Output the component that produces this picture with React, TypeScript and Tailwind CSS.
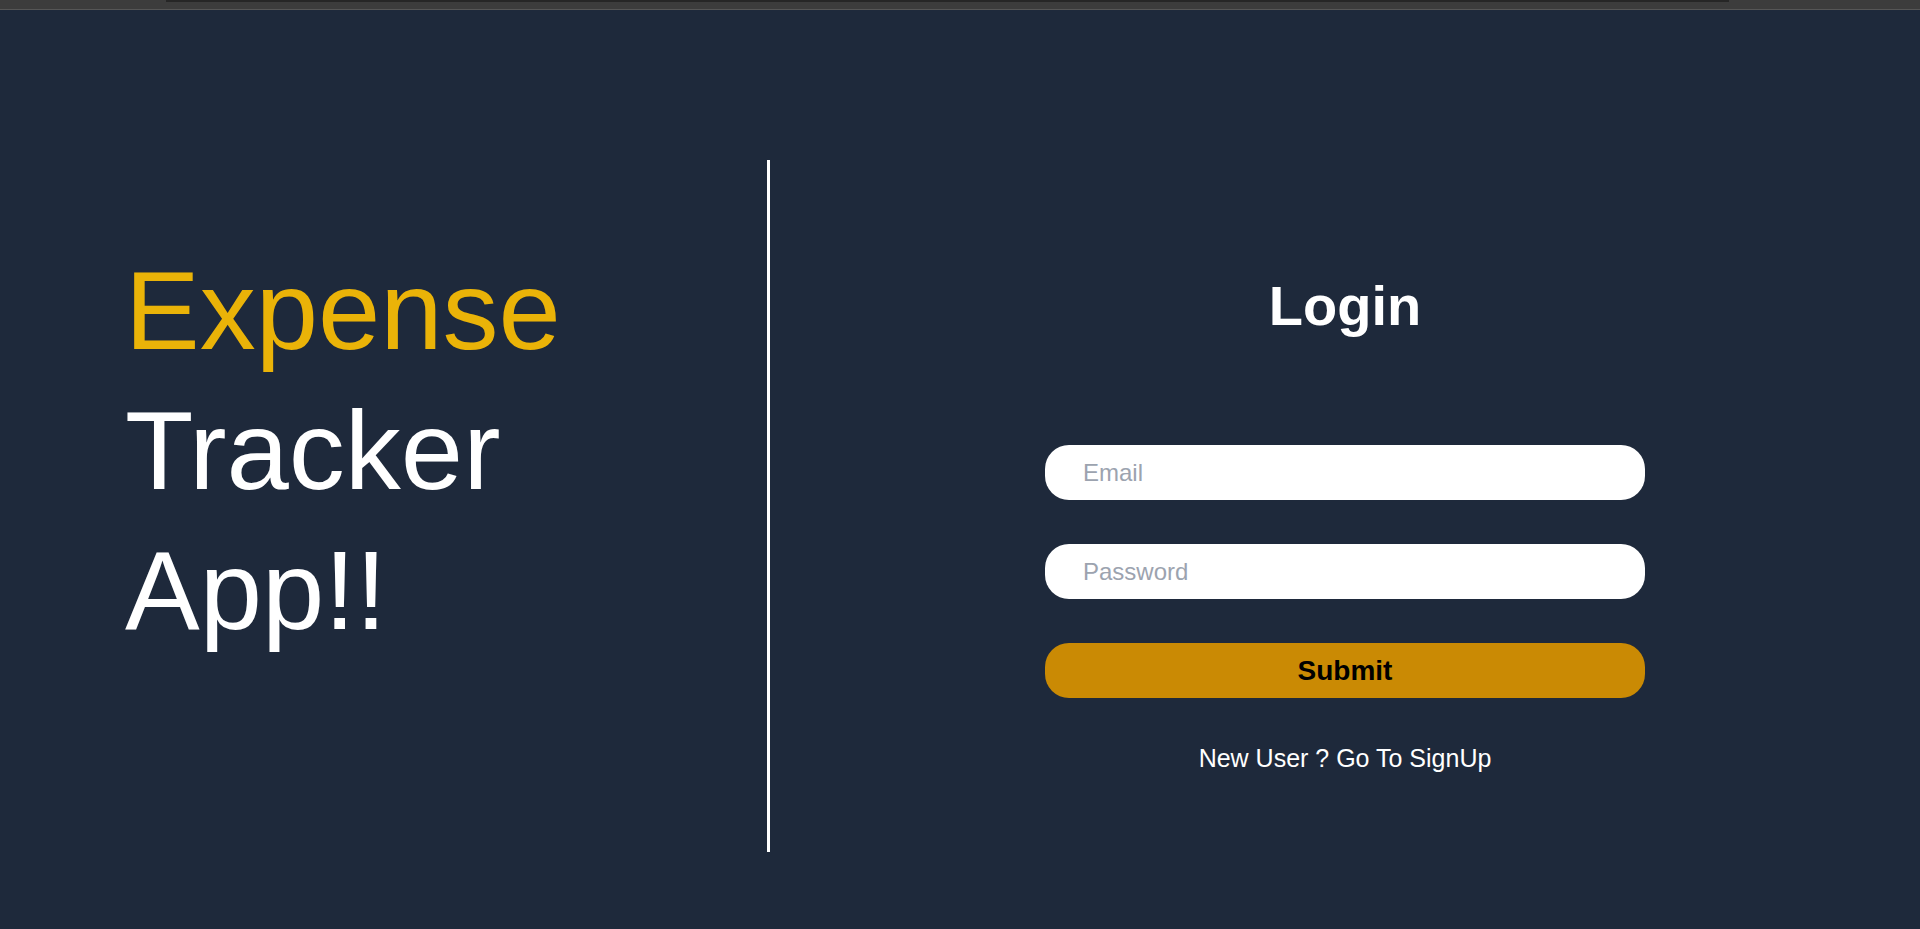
import React from 'react';

export default function App() {
  const [email, setEmail] = React.useState('');
  const [password, setPassword] = React.useState('');

  return (
    <div className="min-h-screen bg-[#1e293b] font-['Liberation_Sans',Arial,sans-serif]">
      {/* top strip */}
      <div className="h-[10px] bg-[#3c3c3c] border-b border-[#565656]">
        <div className="ml-[166px] w-[1563px] h-[2px] bg-[#262626]" />
      </div>

      <div className="flex pt-[150px]">
        {/* Left: title */}
        <div className="w-[770px] h-[692px] border-r-[3px] border-white pl-[125px] pt-[81px]">
          <h1 className="text-[112px] leading-[140px] font-normal">
            <span className="block text-[#eab308]">Expense</span>
            <span className="block text-white">Tracker</span>
            <span className="block text-white">App!!</span>
          </h1>
        </div>

        {/* Right: login form */}
        <div className="flex-1 flex flex-col items-center pt-[118px]">
          <h2 className="text-[56px] leading-[56px] font-bold text-white">Login</h2>

          <form
            className="mt-[111px] flex flex-col gap-[44px]"
            onSubmit={(e) => e.preventDefault()}
          >
            <input
              type="email"
              placeholder="Email"
              value={email}
              onChange={(e) => setEmail(e.target.value)}
              className="w-[600px] h-[55px] rounded-3xl bg-white pl-[38px] text-[24px] text-gray-900 placeholder:text-[#9ca3af] outline-none"
            />
            <input
              type="password"
              placeholder="Password"
              value={password}
              onChange={(e) => setPassword(e.target.value)}
              className="w-[600px] h-[55px] rounded-3xl bg-white pl-[38px] text-[24px] text-gray-900 placeholder:text-[#9ca3af] outline-none"
            />
            <button
              type="submit"
              className="w-[600px] h-[55px] rounded-3xl bg-[#ca8a04] text-[28px] font-bold text-black"
            >
              Submit
            </button>
          </form>

          <a href="#" className="mt-[48px] text-[25px] leading-[25px] text-white">
            New User ? Go To SignUp
          </a>
        </div>
      </div>
    </div>
  );
}
